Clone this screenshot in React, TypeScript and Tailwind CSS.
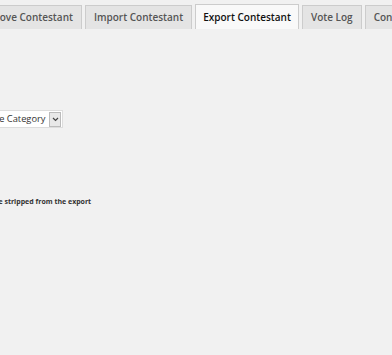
const tabs = [
  { label: "Remove Contestant", active: false },
  { label: "Import Contestant", active: false },
  { label: "Export Contestant", active: true },
  { label: "Vote Log", active: false },
  { label: "Contestant Settings", active: false },
];

const App = () => {
  return (
    <div className="h-[355px] w-[392px] overflow-hidden bg-[#f1f1f1] font-['Open_Sans',sans-serif]">
      <div className="flex items-end gap-[3px] pt-[4px] -ml-[31px] whitespace-nowrap">
        {tabs.map((tab) => (
          <div
            key={tab.label}
            className={
              tab.active
                ? "border border-b-0 border-[#ccc] bg-[#f9f9f9] px-[7px] h-[25px] leading-[25px] text-[10px] font-semibold text-[#111]"
                : "border border-b-0 border-[#ccc] bg-[#e4e4e4] px-[8px] h-[24px] leading-[23px] text-[10px] font-semibold text-[#555]"
            }
          >
            {tab.label}
          </div>
        ))}
      </div>

      <div className="mt-[81px] flex items-center -ml-[33px]">
        <div className="flex h-[18px] items-center border border-[#ddd] bg-white pl-[4px] text-[9.3px] text-[#333]">
          <span className="pr-[4px]">Choose Category</span>
          <span className="mr-[1px] flex h-[15px] w-[12px] items-center justify-center border border-[#bbb] bg-[#e8e8e8]">
            <svg width="7" height="5" viewBox="0 0 7 5">
              <path d="M1 1 L3.5 3.5 L6 1" stroke="#444" strokeWidth="1.2" fill="none" />
            </svg>
          </span>
        </div>
      </div>

      <p className="mt-[69px] -ml-[47px] text-[7px] font-bold text-[#333] whitespace-nowrap">
        Images will be stripped from the export
      </p>
    </div>
  );
};

export default App;
